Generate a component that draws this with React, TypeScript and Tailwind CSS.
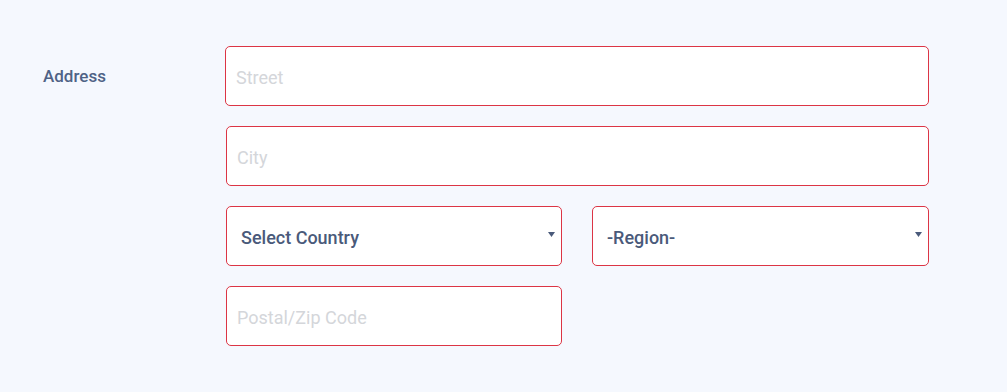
import React from "react";

const font = { fontFamily: "Roboto, 'Open Sans', sans-serif" };

function TextField({ placeholder, className = "" }: { placeholder: string; className?: string }) {
    return (
        <input
            type="text"
            placeholder={placeholder}
            className={`h-[60px] rounded-[5px] border border-[#dc3545] bg-white px-[10px] pt-[3px] text-[18px] text-[#4a5a7a] outline-none placeholder:text-[#d4d6da] ${className}`}
        />
    );
}

function SelectField({ label, className = "" }: { label: string; className?: string }) {
    return (
        <div className={`relative ${className}`}>
            <select className="h-[60px] w-full appearance-none rounded-[5px] border border-[#dc3545] bg-white pl-[14px] pr-[24px] pt-[3px] text-[18px] font-medium text-[#4a5a7a] outline-none">
                <option>{label}</option>
            </select>
            <svg
                className="pointer-events-none absolute right-[7px] top-[26px]"
                width="7"
                height="5"
                viewBox="0 0 7 5"
            >
                <path d="M0 0h7L3.5 5z" fill="#4a5a7a" />
            </svg>
        </div>
    );
}

export default function App() {
    return (
        <div className="h-[392px] w-[1007px] bg-[#f5f8fe] pt-[46px]" style={font}>
            <div className="flex">
                <div className="flex h-[60px] w-[225px] items-center pl-[43px] pt-[1px]">
                    <span className="text-[17px] font-medium text-[#4f6386]">Address</span>
                </div>
                <div className="flex w-[704px] flex-col gap-[20px]">
                    <TextField placeholder="Street" className="w-[704px]" />
                    <TextField placeholder="City" className="ml-[1px] w-[703px]" />
                    <div className="ml-[1px] flex gap-[30px]">
                        <SelectField label="Select Country" className="w-[336px]" />
                        <SelectField label="-Region-" className="w-[337px]" />
                    </div>
                    <TextField placeholder="Postal/Zip Code" className="ml-[1px] w-[336px]" />
                </div>
            </div>
        </div>
    );
}
